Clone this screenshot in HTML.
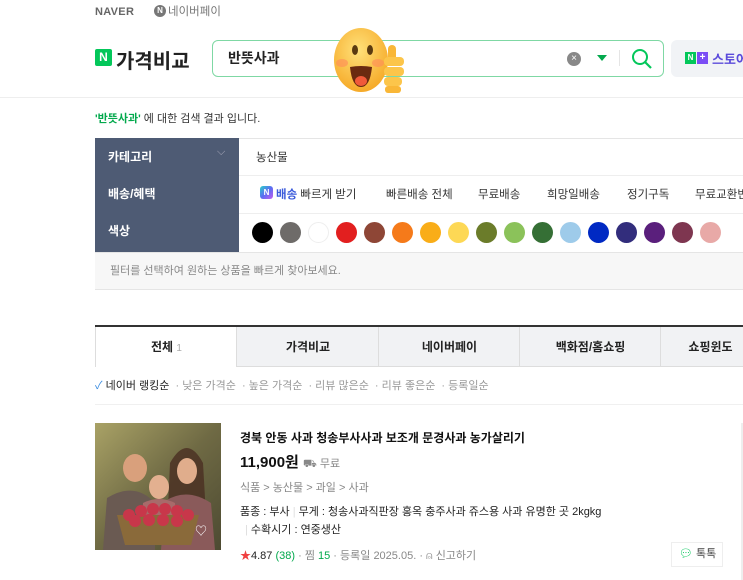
<!DOCTYPE html>
<html><head><meta charset="utf-8"><style>
*{margin:0;padding:0;box-sizing:border-box}
body{width:743px;height:580px;overflow:hidden;background:#fff;font-family:"Liberation Sans","Noto Sans CJK KR",sans-serif;color:#111;position:relative}
.a{position:absolute;white-space:nowrap}
.sw{position:absolute;top:222px;width:21px;height:21px;border-radius:50%}
.tab{position:absolute;top:327px;height:40px;background:#f1f2f4;border-left:1px solid #ddd;border-bottom:1px solid #ddd;font-size:12px;font-weight:bold;text-align:center;line-height:40px;color:#222}
.f{font-size:11.5px;color:#333}
</style></head><body>
<div class="a" style="left:95px;top:6px;font-size:11px;font-weight:bold;color:#666;letter-spacing:.3px">NAVER</div>
<div class="a" style="left:154px;top:5px;width:12px;height:12px;border-radius:50%;background:#777;color:#fff;font-size:8px;font-weight:bold;text-align:center;line-height:12px">N</div>
<div class="a" style="left:168px;top:3px;font-size:11.5px;color:#777">네이버페이</div>
<div class="a" style="left:95px;top:49px;width:17px;height:17px;background:#03c75a;border-radius:2px;color:#fff;font-size:12px;font-weight:bold;text-align:center;line-height:17px">N</div>
<div class="a" style="left:116px;top:45px;font-size:20px;font-weight:bold;color:#222">가격비교</div>
<div class="a" style="left:212px;top:40px;width:452px;height:37px;border:1.5px solid #7fd8a4;border-radius:6px"></div>
<div class="a" style="left:228px;top:48px;font-size:14px;font-weight:bold;color:#222">반뜻사과</div>
<div class="a" style="left:567px;top:52px;width:14px;height:14px;border-radius:50%;background:#888;color:#fff;font-size:10px;text-align:center;line-height:14px">×</div>
<div class="a" style="left:597px;top:55px;width:0;height:0;border-left:5px solid transparent;border-right:5px solid transparent;border-top:6px solid #03a94d"></div>
<div class="a" style="left:619px;top:50px;width:1px;height:16px;background:#e5e5e5"></div>
<svg class="a" style="left:631px;top:48px" width="22" height="22" viewBox="0 0 22 22"><circle cx="9" cy="9" r="7" fill="none" stroke="#03c75a" stroke-width="2"/><line x1="14" y1="14" x2="20" y2="20" stroke="#03c75a" stroke-width="2.2"/></svg>
<div class="a" style="left:671px;top:40px;width:80px;height:37px;background:#f1f3f6;border-radius:6px"></div>
<div class="a" style="left:685px;top:52px;width:11px;height:12px;background:#03c75a;color:#fff;font-size:8px;font-weight:bold;text-align:center;line-height:12px">N</div>
<div class="a" style="left:697px;top:52px;width:11px;height:12px;background:#7b4df5;color:#fff;font-size:10px;font-weight:bold;text-align:center;line-height:12px">+</div>
<div class="a" style="left:712px;top:49px;font-size:13px;font-weight:bold;color:#5b4bdb">스토어</div>
<svg class="a" style="left:330px;top:27px" width="78" height="68" viewBox="0 0 78 68">
<defs><radialGradient id="g" cx=".45" cy=".35" r=".7"><stop offset="0" stop-color="#ffe17a"/><stop offset="1" stop-color="#f5a623"/></radialGradient></defs>
<ellipse cx="31" cy="33" rx="27" ry="32" fill="url(#g)"/>
<ellipse cx="25" cy="23" rx="3" ry="5" fill="#5a3a10"/><ellipse cx="40" cy="23" rx="3" ry="5" fill="#5a3a10"/>
<ellipse cx="12" cy="36" rx="6" ry="4" fill="#ff8a5a" opacity=".6"/><ellipse cx="48" cy="36" rx="6" ry="4" fill="#ff8a5a" opacity=".6"/>
<path d="M20 40 Q31 38 42 40 Q40 60 31 60 Q22 60 20 40Z" fill="#6a2a10"/><ellipse cx="31" cy="54" rx="6" ry="5" fill="#f05a3a"/>
<rect x="58" y="18" width="8" height="16" rx="4" fill="#f9b737"/>
<rect x="54" y="30" width="20" height="9" rx="4" fill="#fcc54a"/><rect x="54" y="40" width="20" height="9" rx="4" fill="#fcc54a"/><rect x="54" y="50" width="18" height="9" rx="4" fill="#fcc54a"/><rect x="55" y="59" width="16" height="7" rx="3" fill="#f9b737"/>
</svg>
<div class="a" style="left:0;top:97px;width:743px;height:1px;background:#eee"></div>
<div class="a" style="left:95px;top:110px;font-size:11px;color:#333"><span style="color:#03a94d;font-weight:bold">'반뜻사과'</span> 에 대한 검색 결과 입니다.</div>
<div class="a" style="left:95px;top:138px;width:648px;height:1px;background:#e5e5e5"></div>
<div class="a" style="left:95px;top:138px;width:144px;height:114px;background:#4e5b74"></div>
<div class="a" style="left:108px;top:148px;font-size:12px;font-weight:bold;color:#fff">카테고리</div>
<div class="a" style="left:217px;top:146px;font-size:11px;color:#aab">⌵</div>
<div class="a" style="left:108px;top:185px;font-size:12px;font-weight:bold;color:#fff">배송/혜택</div>
<div class="a" style="left:108px;top:222px;font-size:12px;font-weight:bold;color:#fff">색상</div>
<div class="a" style="left:239px;top:175px;width:504px;height:1px;background:#eee"></div>
<div class="a" style="left:239px;top:213px;width:504px;height:1px;background:#eee"></div>
<div class="a f" style="left:256px;top:149px">농산물</div>
<div class="a" style="left:260px;top:186px;width:13px;height:13px;border-radius:3px;background:linear-gradient(135deg,#2ad2c9,#5b6cf2,#c45ef0);color:#fff;font-size:8px;font-weight:bold;text-align:center;line-height:13px">N</div>
<div class="a f" style="left:276px;top:186px"><span style="color:#3b5bdb;font-weight:bold">배송</span> 빠르게 받기</div>
<div class="a f" style="left:386px;top:186px">빠른배송 전체</div>
<div class="a f" style="left:478px;top:186px">무료배송</div>
<div class="a f" style="left:547px;top:186px">희망일배송</div>
<div class="a f" style="left:627px;top:186px">정기구독</div>
<div class="a f" style="left:695px;top:186px">무료교환반품</div>
<div class="sw" style="left:252px;background:#000"></div>
<div class="sw" style="left:280px;background:#6e6b69"></div>
<div class="sw" style="left:308px;background:#fff;border:1px solid #eee"></div>
<div class="sw" style="left:336px;background:#e21f1f"></div>
<div class="sw" style="left:364px;background:#8e4636"></div>
<div class="sw" style="left:392px;background:#f57a1a"></div>
<div class="sw" style="left:420px;background:#f9ad18"></div>
<div class="sw" style="left:448px;background:#fdd855"></div>
<div class="sw" style="left:476px;background:#6b7c2a"></div>
<div class="sw" style="left:504px;background:#8bc25a"></div>
<div class="sw" style="left:532px;background:#356f35"></div>
<div class="sw" style="left:560px;background:#9ecbea"></div>
<div class="sw" style="left:588px;background:#0029c3"></div>
<div class="sw" style="left:616px;background:#322d7c"></div>
<div class="sw" style="left:644px;background:#5a1f7c"></div>
<div class="sw" style="left:672px;background:#7e3650"></div>
<div class="sw" style="left:700px;background:#e8a9a7"></div>
<div class="a" style="left:95px;top:252px;width:648px;height:38px;background:#f7f7f7;border-top:1px solid #e5e5e5;border-bottom:1px solid #e5e5e5"></div>
<div class="a" style="left:110px;top:262px;font-size:11px;color:#888">필터를 선택하여 원하는 상품을 빠르게 찾아보세요.</div>
<div class="a" style="left:95px;top:325px;width:648px;height:2px;background:#333"></div>
<div class="tab" style="left:95px;width:142px;background:#fff;border-bottom:none">전체 <span style="color:#aaa;font-weight:normal;font-size:10px">1</span></div>
<div class="tab" style="left:236px;width:143px">가격비교</div>
<div class="tab" style="left:378px;width:142px">네이버페이</div>
<div class="tab" style="left:519px;width:142px">백화점/홈쇼핑</div>
<div class="tab" style="left:660px;width:100px">쇼핑윈도</div>
<div class="a" style="left:95px;top:377px;font-size:11px;color:#999"><span style="color:#3c8de0">✓</span> <span style="color:#222">네이버 랭킹순</span> &nbsp;· 낮은 가격순 &nbsp;· 높은 가격순 &nbsp;· 리뷰 많은순 &nbsp;· 리뷰 좋은순 &nbsp;· 등록일순</div>
<div class="a" style="left:95px;top:404px;width:648px;height:1px;background:#f0f0f0"></div>
<svg class="a" style="left:95px;top:423px" width="126" height="127" viewBox="0 0 126 127">
<defs><linearGradient id="bg" x1="0" y1="0" x2="1" y2="1"><stop offset="0" stop-color="#a9a266"/><stop offset=".5" stop-color="#6f6a44"/><stop offset="1" stop-color="#4d4a32"/></linearGradient></defs>
<rect width="126" height="127" fill="url(#bg)"/>
<ellipse cx="40" cy="45" rx="12" ry="14" fill="#d9a07c"/><path d="M8 127 L12 75 Q40 58 60 80 L60 127Z" fill="#6a5a52"/>
<path d="M75 40 Q92 10 108 40 L112 110 L72 110Z" fill="#4a2e22" opacity=".8"/><ellipse cx="92" cy="48" rx="10" ry="13" fill="#e0ad8c"/>
<path d="M66 127 L70 78 Q92 64 116 80 L120 127Z" fill="#8a5a5a"/>
<ellipse cx="64" cy="64" rx="10" ry="12" fill="#e3b090"/><path d="M46 110 L48 80 Q64 72 80 80 L82 110Z" fill="#a86a6a"/>
<path d="M22 92 L104 92 L96 122 L30 122Z" fill="#8a6a3a"/>
<g fill="#c8374a"><circle cx="34" cy="92" r="6"/><circle cx="46" cy="88" r="6"/><circle cx="58" cy="86" r="6"/><circle cx="70" cy="86" r="6"/><circle cx="82" cy="88" r="6"/><circle cx="93" cy="92" r="6"/><circle cx="40" cy="98" r="6"/><circle cx="54" cy="97" r="6"/><circle cx="68" cy="97" r="6"/><circle cx="82" cy="98" r="6"/></g>
<text x="100" y="112" font-size="12" fill="#fff">♡</text>
</svg>
<div class="a" style="left:240px;top:429px;font-size:12px;font-weight:bold;color:#111">경북 안동 사과 청송부사사과 보조개 문경사과 농가살리기</div>
<div class="a" style="left:240px;top:451px;font-size:15px;font-weight:bold;color:#111">11,900원 <span style="font-size:11px;color:#888;font-weight:normal">⛟ 무료</span></div>
<div class="a" style="left:240px;top:479px;font-size:11px;color:#888">식품 &gt; 농산물 &gt; 과일 &gt; 사과</div>
<div class="a" style="left:240px;top:503px;font-size:11px;color:#222">품종 : 부사 <span style="color:#ddd">|</span> 무게 : 청송사과직판장 홍옥 충주사과 쥬스용 사과 유명한 곳 2kgkg</div>
<div class="a" style="left:245px;top:521px;font-size:11px;color:#222"><span style="color:#ddd">|</span> 수확시기 : 연중생산</div>
<div class="a" style="left:240px;top:547px;font-size:11px;color:#888"><span style="color:#f04040">★</span><span style="color:#222">4.87</span> <span style="color:#03a94d">(38)</span> · 찜 <span style="color:#03a94d">15</span> · 등록일 2025.05. · ⍝ 신고하기</div>
<div class="a" style="left:671px;top:542px;width:52px;height:25px;border:1px solid #eee;font-size:11px;color:#444;line-height:23px;padding-left:7px"><span style="color:#03c75a">💬︎</span> 톡톡</div>
<div class="a" style="left:741px;top:423px;width:2px;height:157px;background:#eee"></div>
</body></html>
